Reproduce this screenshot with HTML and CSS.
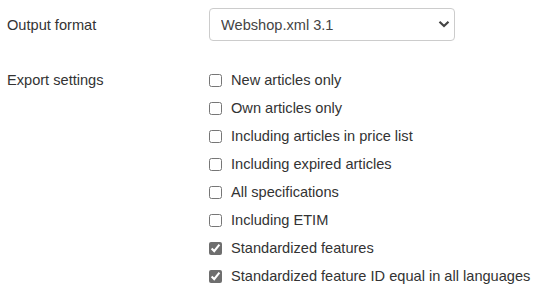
FILE: index.html
```html
<!DOCTYPE html>
<html lang="en">
<head>
    <meta charset="UTF-8">
    <meta name="viewport" content="width=device-width, initial-scale=1.0">
    <title>Export</title>
    <link rel="stylesheet" href="styles.css">
</head>
<body>
    <form class="export-form">
        <div class="form-row format-row">
            <label class="row-label" for="outputFormat">Output format</label>
            <div class="select-wrap">
                <select id="outputFormat" class="format-select">
                    <option>Webshop.xml 3.1</option>
                </select>
                <svg class="select-arrow" width="12" height="8" viewBox="0 0 12 8">
                    <path d="M1.5 1.8 L6 6 L10.5 1.8" fill="none" stroke="#444" stroke-width="2.2"/>
                </svg>
            </div>
        </div>
        <div class="form-row settings-row">
            <div class="row-label settings-label">Export settings</div>
            <div class="check-list">
                <label class="check-item"><input type="checkbox"> New articles only</label>
                <label class="check-item"><input type="checkbox"> Own articles only</label>
                <label class="check-item"><input type="checkbox"> Including articles in price list</label>
                <label class="check-item"><input type="checkbox"> Including expired articles</label>
                <label class="check-item"><input type="checkbox"> All specifications</label>
                <label class="check-item"><input type="checkbox"> Including ETIM</label>
                <label class="check-item"><input type="checkbox" checked> Standardized features</label>
                <label class="check-item"><input type="checkbox" checked> Standardized feature ID equal in all languages</label>
            </div>
        </div>
    </form>
</body>
</html>
```

FILE: styles.css
```css
body {
    margin: 0;
    padding: 0 7px;
    background-color: #fff;
    color: #333;
    font-family: "Liberation Sans", Arial, sans-serif;
    font-size: 14.6px;
}
.export-form {
    display: flex;
    flex-direction: column;
    gap: 25px;
    padding-top: 8px;
}
.form-row {
    display: flex;
}
.format-row {
    align-items: center;
}
.row-label {
    width: 202px;
    flex-shrink: 0;
}
.settings-label {
    line-height: 28px;
}
.select-wrap {
    position: relative;
    width: 246px;
}
.format-select {
    appearance: none;
    -webkit-appearance: none;
    width: 100%;
    height: 33px;
    margin: 0;
    padding: 0 30px 0 11px;
    border: 1px solid #ccc;
    border-radius: 4px;
    background-color: #fff;
    color: #444;
    font-family: inherit;
    font-size: 14.6px;
}
.select-arrow {
    position: absolute;
    right: 5px;
    top: 12px;
    pointer-events: none;
}
.check-list {
    display: flex;
    flex-direction: column;
}
.check-item {
    display: flex;
    align-items: center;
    gap: 9px;
    height: 28px;
}
.check-item input {
    width: 13px;
    height: 13px;
    margin: 0;
    accent-color: #6e6e6e;
}
```
